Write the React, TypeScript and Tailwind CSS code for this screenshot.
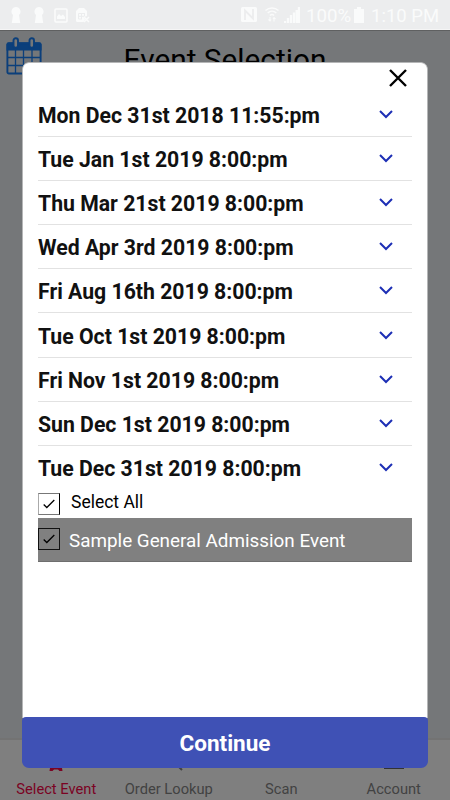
const dates = [
  'Mon Dec 31st 2018 11:55:pm',
  'Tue Jan 1st 2019 8:00:pm',
  'Thu Mar 21st 2019 8:00:pm',
  'Wed Apr 3rd 2019 8:00:pm',
  'Fri Aug 16th 2019 8:00:pm',
  'Tue Oct 1st 2019 8:00:pm',
  'Fri Nov 1st 2019 8:00:pm',
  'Sun Dec 1st 2019 8:00:pm',
  'Tue Dec 31st 2019 8:00:pm',
];

function KeyholeIcon() {
  return (
    <svg width="10" height="16" viewBox="0 0 10 16" fill="currentColor">
      <path d="M5 0a4.600 4.600 0 0 0-3 8L.800 16h8.400L8 8a4.600 4.600 0 0 0-3-8z" />
    </svg>
  );
}

function StatusBar() {
  return (
    <header className="h-[30px] shrink-0 flex items-center justify-between bg-[#ecedee] border-b border-[#f5f5f5] pl-[11px] pr-[10px] text-[#fafbfb]">
      <div className="flex items-center pt-px">
        <KeyholeIcon />
        <span className="ml-[13px]"><KeyholeIcon /></span>
        <svg className="ml-[10px]" width="14" height="15" viewBox="0 0 14 15" fill="none">
          <rect x="1" y="1" width="12" height="13" rx="1" stroke="currentColor" strokeWidth="1.6" />
          <path d="M3 11V8.500l2-2.500 2 2 2-1.500 2 2.500v2z" fill="currentColor" />
        </svg>
        <svg className="ml-[8px]" width="14" height="15" viewBox="0 0 14 15">
          <path d="M3 0h5l3 3v5l-3.500 1 1.500 2.500L7.500 14H1.500Q0 14 0 12.500V3z" fill="currentColor" />
          <path d="M2.500 5.500h6M2.500 11V5.500M5.500 5.500V11M8.500 5v3M2.500 8.300h6M2.500 11h3.500" stroke="#ecedee" fill="none" />
          <path d="M8 9l5 5M13 9l-5 5" stroke="currentColor" strokeWidth="1.500" />
        </svg>
      </div>
      <div className="flex items-center pt-px">
        <svg width="16" height="15" viewBox="0 0 16 15">
          <rect width="16" height="15" rx="1.500" fill="currentColor" />
          <path d="M4 13V3.500l8 8V2" stroke="#ecedee" strokeWidth="1.800" fill="none" />
        </svg>
        <svg className="ml-[8px]" width="14" height="15" viewBox="0 0 14 15" fill="none" stroke="currentColor" strokeWidth="1.500">
          <path d="M.500 3.500c3.700-3.500 9.300-3.500 13 0M2.700 6c2.500-2.300 6.100-2.300 8.600 0M5 8.500c1.200-1.200 2.800-1.200 4 0" />
          <path d="M5 10v4M3.500 12.500L5 14l1-1.500M9 14.500V11M8 12l1-1.500 1.500 1.500" strokeWidth="1.100" />
        </svg>
        <svg className="ml-[5px]" width="16" height="16" viewBox="0 0 16 16" stroke="currentColor" strokeWidth="2.300">
          <path d="M1 16v-2M4 16v-5M7 16V8M10 16V5.500M12.700 16V3M15 16V0" />
        </svg>
        <span className="ml-[6px] w-[46px] text-[18.700px] leading-none whitespace-nowrap pt-[2px]">100%</span>
        <svg className="ml-[2px]" width="10" height="16" viewBox="0 0 10 16" fill="currentColor">
          <path d="M3 0h4v2h3v14H0V2h3z" />
        </svg>
        <span className="ml-[7px] w-[69px] text-[18.500px] leading-none whitespace-nowrap pt-[2px]">1:10 PM</span>
      </div>
    </header>
  );
}

function CalendarIcon() {
  return (
    <svg width="36" height="38" viewBox="0 0 36 38" fill="none" stroke="#0b3f7b">
      <path d="M2.500 5.500h31q2 0 2 2V13.500H.500V7.500q0-2 2-2z" fill="#0b3f7b" stroke="none" />
      <rect x="1.400" y="6.300" width="33.200" height="30.200" rx="1.500" strokeWidth="1.900" />
      <path d="M9.500 13v23M17.500 13v23M26 13v23M1 20.500h34M1 28.500h34" strokeWidth="1.300" />
      <rect x="7.500" y="1.200" width="4.500" height="9.500" rx="2.200" fill="#757779" strokeWidth="1.900" />
      <rect x="23.500" y="1.200" width="4.500" height="9.500" rx="2.200" fill="#757779" strokeWidth="1.900" />
    </svg>
  );
}

function Checkbox({ filled = false }: { filled?: boolean }) {
  return (
    <span className={filled
      ? 'size-[22px] shrink-0 flex items-center justify-center border border-[#111] text-black'
      : 'size-[22px] shrink-0 flex items-center justify-center border border-t-[#777] border-l-[#aaa] border-r-black border-b-[#777] text-black'}>
      <svg width="12" height="10" viewBox="0 0 12 10" fill="none" stroke="currentColor" strokeWidth="1.300">
        <path d="M.700 5.500l3.100 3L11.300 1" />
      </svg>
    </span>
  );
}

function BottomNav() {
  return (
    <nav className="h-[62px] shrink-0 grid grid-cols-4 bg-[#7f7f7f] border-t-2 border-[#737373] text-[14.700px] leading-[18px] text-[#424242] text-center">
      <div className="flex flex-col items-center justify-end pb-[2px] text-[#7b0323]">
        <svg className="mb-[9px]" width="14" height="12" viewBox="0 0 14 12" fill="currentColor">
          <path d="M1 0h12v9l.500 3h-3L9 10.500H5L3.500 12h-3L1 9z" />
        </svg>
        Select Event
      </div>
      <div className="flex flex-col items-center justify-end pb-[2px]">
        <svg className="mb-[9px] ml-[18px]" width="14" height="12" viewBox="0 0 14 12" stroke="currentColor" strokeWidth="2">
          <path d="M1 1l10 10" />
        </svg>
        Order Lookup
      </div>
      <div className="flex flex-col justify-end pb-[2px]">Scan</div>
      <div className="flex flex-col items-center justify-end pb-[2px]">
        <span className="w-5 h-3 mb-[11px] border-b border-[#333]" />
        Account
      </div>
    </nav>
  );
}

function EventModal() {
  return (
    <div className="absolute left-[22px] top-[62px] w-[406px] h-[706px] flex flex-col rounded-[7px] overflow-hidden">
      <div className="flex-1 flex flex-col bg-white rounded-t-[7px] border-x border-t border-[#b5b6b7]">
        <div className="h-[30px] shrink-0 flex justify-end items-center pr-[20px]">
          <svg width="18" height="18" viewBox="0 0 18 18" stroke="black" strokeWidth="2.400">
            <path d="M1 1l16 16M17 1L1 17" />
          </svg>
        </div>

        <div className="px-[15px]">
          {dates.map((date) => (
            <div key={date} className="h-[44.100px] flex items-center justify-between pr-[19px] border-b border-[#e2e2e2] last-of-type:border-0 text-[#111]">
              <span className="text-[21.230px] leading-6 font-bold whitespace-nowrap pt-[3px]">{date}</span>
              <svg width="14" height="9" viewBox="0 0 14 9" fill="none" stroke="#1d2fb5" strokeWidth="2">
                <path d="M1 1l6 6 6-6" />
              </svg>
            </div>
          ))}
          <section>
            <div className="h-[28px] flex items-center gap-[11px] text-[17.500px] text-black">
              <Checkbox />
              <span className="pb-[3px]">Select All</span>
            </div>
            <div className="h-[44px] flex items-center gap-[9px] bg-[#808080] border-b border-[#6e6e6e] text-[18.850px] text-white">
              <Checkbox filled />
              <span className="pt-[3px] whitespace-nowrap">Sample General Admission Event</span>
            </div>
          </section>
        </div>
      </div>

      <button className="h-[51px] shrink-0 -mt-px rounded-t-[4px] bg-[#3f51b5] pt-[3px] text-[22.500px] font-bold text-white">
        Continue
      </button>
    </div>
  );
}

export default function App() {
  return (
    <div className="relative w-[450px] h-[800px] flex flex-col overflow-hidden bg-[#757779] font-['Roboto',sans-serif]">
      <StatusBar />
      <main className="flex-1 flex items-start border-t border-[#5f6061] pl-[6px] pt-[6px]">
        <CalendarIcon />
        <h1 className="w-[366px] text-center text-[29.800px] leading-[34px] pt-[6px] text-black">Event Selection</h1>
      </main>
      <BottomNav />
      <EventModal />
    </div>
  );
}
